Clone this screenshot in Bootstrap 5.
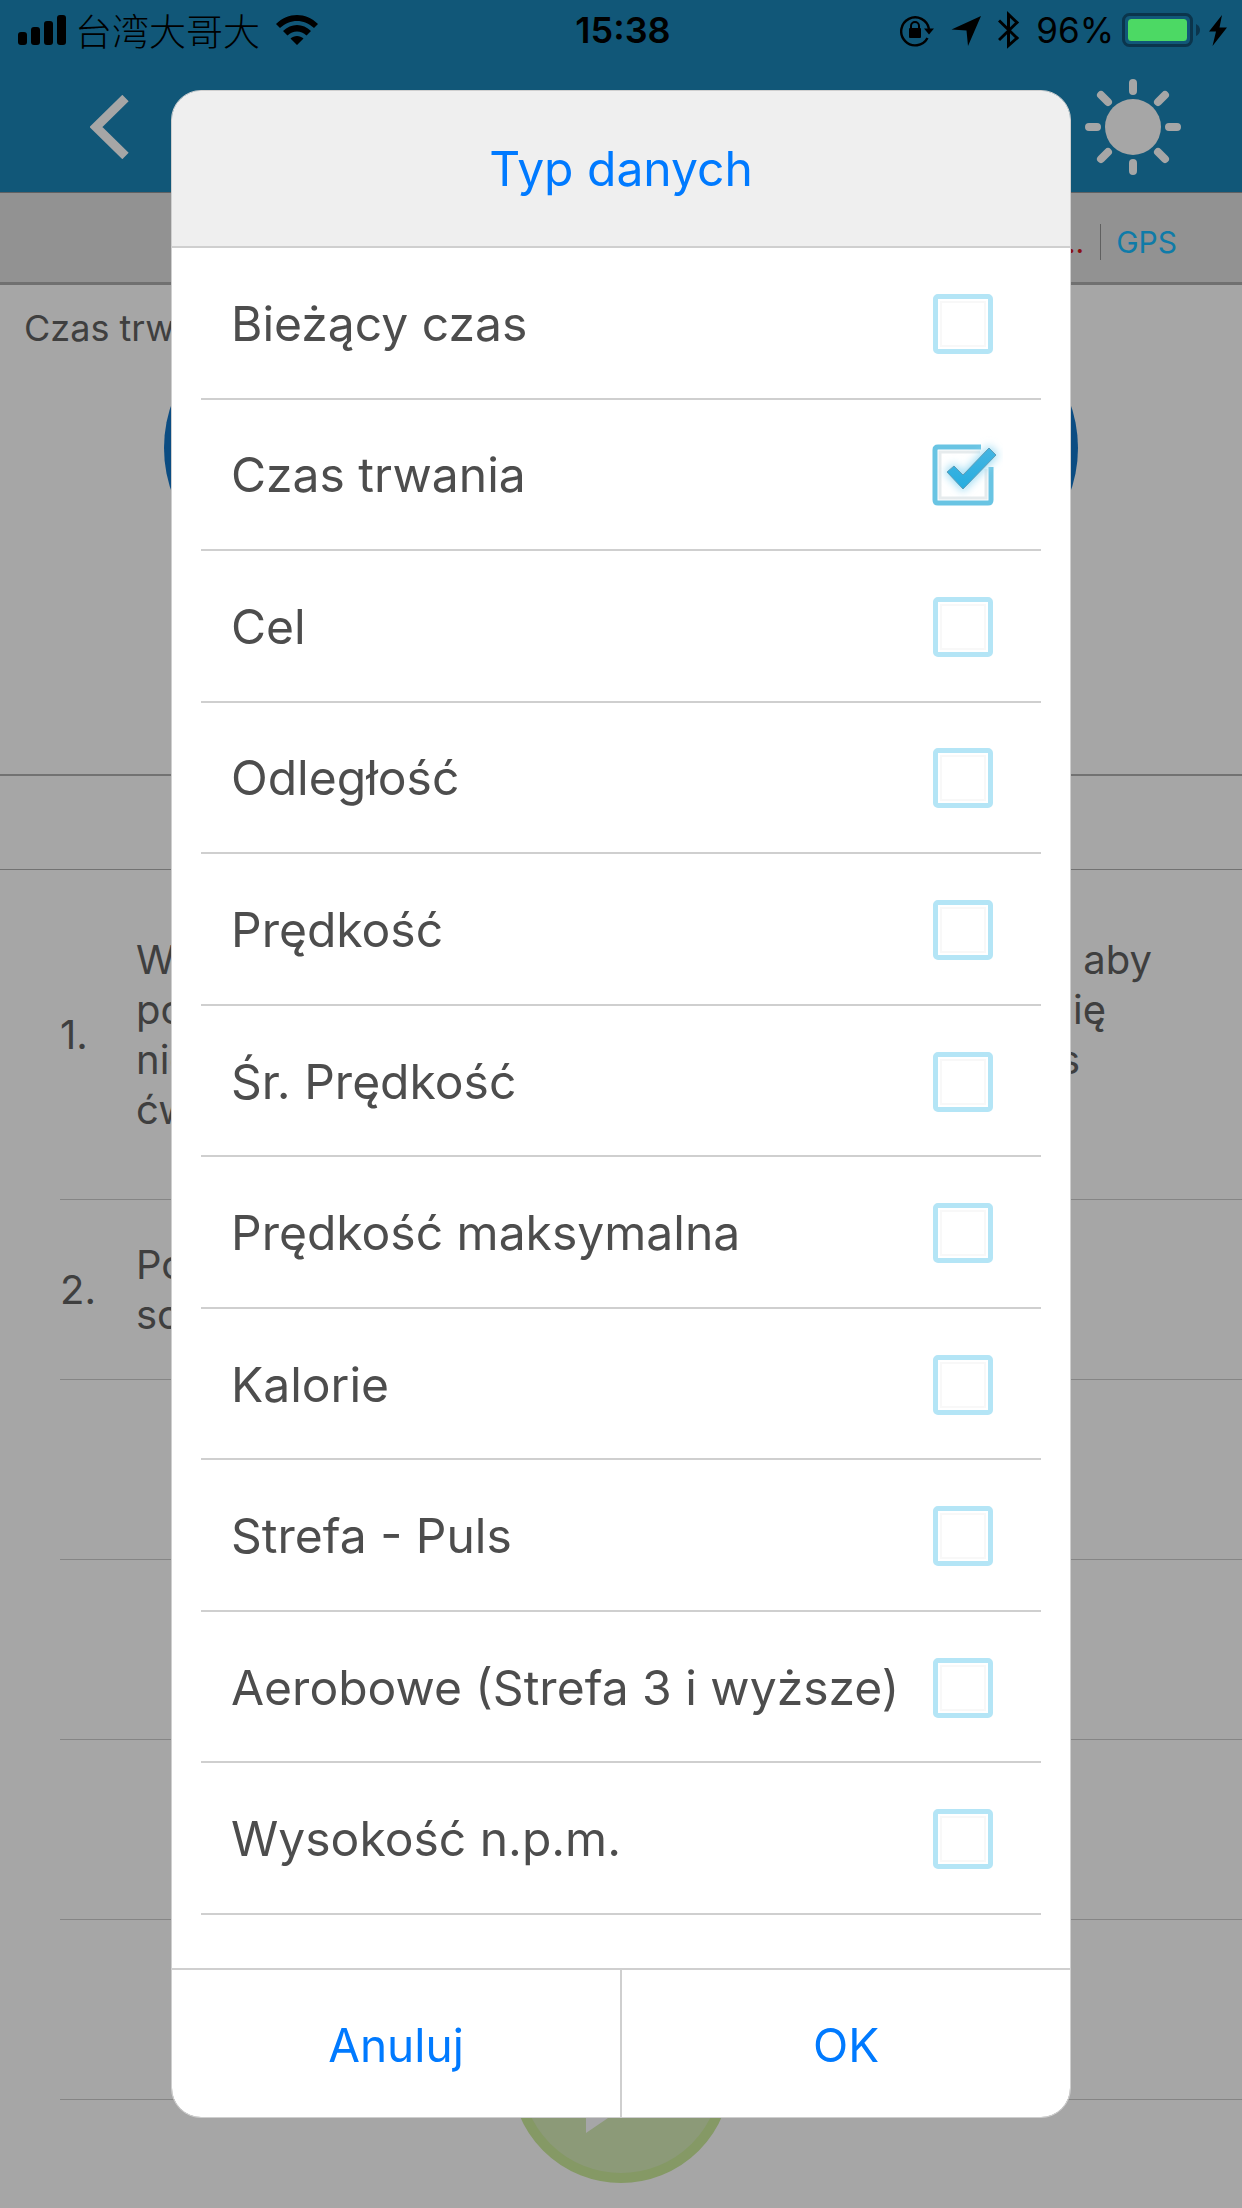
<!DOCTYPE html>
<html lang="pl">
<head>
<meta charset="utf-8">
<meta name="viewport" content="width=device-width, initial-scale=1">
<title>Typ danych</title>
<link href="https://cdn.jsdelivr.net/npm/bootstrap@5.3.0/dist/css/bootstrap.min.css" rel="stylesheet">
<style>
  body { font-family: Inter, "Noto Sans CJK SC", sans-serif; background: #a6a6a6; color: #3f3f3f; }
  .app-screen { min-height: 100vh; }
  .app-top { background: #115778; border-bottom: 1px solid #5f6163; }
  .status-bar { height: 60px; padding: 0 14px 0 18px; color: #000; font-size: 36px; line-height: 60px; }
  .status-side { flex: 1 1 0; height: 60px; }
  .carrier { font-family: "Noto Sans CJK SC", sans-serif; font-weight: 300; font-size: 37px; line-height: 60px; margin: 0 16px 0 8px; }
  .clock { font-weight: 600; }
  .charge { font-size: 35px; }
  .title-bar { height: 132px; padding: 2px 61px 0 90px; }
  .bare-btn { border: 0; background: none; padding: 0; line-height: 0; }
  .sensor-bar { height: 92px; background: #929292; border-bottom: 3px solid #707070; padding: 9px 65px 0 0; font-size: 30px; line-height: 44px; }
  .sensor-off { color: #8a1012; padding-right: 16px; }
  .sensor-on { color: #0f7ba8; border-left: 1px solid #5f5f5f; padding-left: 15px; line-height: 36px; }
  .data-panel { height: 491px; border-bottom: 2px solid #727272; }
  .data-panel > * { grid-area: 1 / 1; }
  .data-label { font-size: 36px; line-height: 54px; padding: 16px 24px; }
  .data-pill { width: 914px; height: 264px; margin-top: 31px; border-radius: 132px; background: #0b4c82; border: 0; }
  .tab-strip { height: 94px; border-bottom: 1px solid #727272; }
  .step-list { font-size: 40px; line-height: 50px; padding-left: 60px; }
  .step-item { min-height: 180px; border-bottom: 1px solid #858585; }
  .step-item.tall { min-height: 330px; }
  .step-no { flex: 0 0 76px; }
  .line-long { padding-right: 90px; }
  .line-mid { padding-right: 136px; }
  .line-short { padding-right: 162px; }
  .play-btn { bottom: 25px; left: 50%; margin-left: -110px; }

  .type-modal .modal-dialog { max-width: 900px; margin: 90px auto; }
  .type-modal .modal-content { border: 1px solid #cfcfcf; border-radius: 30px; overflow: hidden; color: #4d4d4d; }
  .type-modal .modal-header { height: 157px; padding: 0; border-bottom: 2px solid #cfcfcf; border-radius: 0; background: #efefef; }
  .type-modal .modal-title { font-size: 48px; line-height: 60px; font-weight: 400; color: #007aff; }
  .type-modal .modal-body { padding: 0 29px 53px; }
  .type-list { min-height: 1667px; }
  .type-row { flex: 1 1 0; border-bottom: 2px solid #cfcfcf; padding: 2px 48px 0 30px; font-size: 48px; line-height: 60px; cursor: pointer; }
  .tick-box { width: 60px; height: 60px; }
  .tick-box input { appearance: none; display: block; width: 60px; height: 60px; margin: 0; border: 5px solid #b4e5f6; border-radius: 5px; background: #fff; box-shadow: inset 0 0 0 2px #fff, inset 0 0 0 4px #f8f8f8; }
  .tick-box input:checked { border-color: transparent; box-shadow: none; }
  .tick-box svg { left: -10px; top: -10px; pointer-events: none; }
  .type-modal .modal-footer { height: 149px; padding: 0; border-top: 2px solid #cfcfcf; border-radius: 0; }
  .type-modal .modal-footer > * { margin: 0; }
  .answer-btn { flex: 1 1 0; border: 0; background: none; color: #007aff; font-size: 46px; line-height: 60px; padding: 2px 0 0; }
  .answer-btn + .answer-btn { border-left: 2px solid #cfcfcf; }
</style>
<script src="https://cdn.jsdelivr.net/npm/bootstrap@5.3.0/dist/js/bootstrap.bundle.min.js"></script>
</head>
<body>
<div class="app-screen position-relative overflow-hidden">
  <header class="app-top">
    <div class="status-bar d-flex align-items-center">
      <div class="status-side d-flex align-items-center">
        <svg width="49" height="60" viewBox="0 0 49 60"><rect y="32" width="9" height="13" rx="3"/><rect x="13" y="27" width="9" height="18" rx="3"/><rect x="26" y="21" width="9" height="24" rx="3"/><rect x="39" y="15" width="9" height="30" rx="3"/></svg>
        <span class="carrier">台湾大哥大</span>
        <svg width="42" height="60" viewBox="0 0 42 60"><path d="M0 24C12 12 30 12 42 24L38 28C28 18.500 14 18.500 4 28ZM7 31C15 23 27 23 35 31L30.500 35.500C25 30 17 30 11.500 35.500ZM14.500 38.500C18 35 24 35 27.500 38.500L21 45Z"/></svg>
      </div>
      <span class="clock">15:38</span>
      <div class="status-side d-flex align-items-center justify-content-end">
        <svg width="34" height="60" viewBox="0 0 34 60"><path d="M27.500 38A14 14 0 1 1 29 29" fill="none" stroke="#000" stroke-width="2.400"/><path d="M24 28.500H34L29 34.500Z"/><rect x="9" y="28" width="12" height="10" rx="1"/><path d="M11 29V26A4 4 0 0 1 19 26V29" fill="none" stroke="#000" stroke-width="2"/></svg>
        <svg class="ms-3 me-3" width="32" height="60" viewBox="0 0 32 60"><path d="M31 16L18 46L16.500 30.500L1.500 29.500Z"/></svg>
        <svg width="22" height="60" viewBox="0 0 22 60"><path d="M1 20.500L19 38L10.500 45.500V14.500L19 22.500L1 40" fill="none" stroke="#000" stroke-width="3"/></svg>
        <span class="charge ms-3 me-2">96%</span>
        <svg width="106" height="60" viewBox="0 0 106 60"><rect x="1.500" y="14.500" width="68" height="31" rx="6" fill="none" stroke="#0b354c" stroke-width="3"/><rect x="6" y="19" width="59" height="22" rx="3.500" fill="#4cd964"/><path d="M74 24Q78 26 78 30T74 36Z" fill="#0b354c"/><path d="M100 15L87 31.500H94L90.500 46L105 27.500H97.500Z"/></svg>
      </div>
    </div>
    <div class="title-bar d-flex align-items-center justify-content-between">
      <button class="bare-btn" type="button" aria-label="Wstecz"><svg width="40" height="64" viewBox="0 0 40 64"><path d="M35.500 3L6 32L35.500 61" fill="none" stroke="#a6a6a6" stroke-width="9"/></svg></button>
      <button class="bare-btn" type="button" aria-label="Jasność"><svg width="96" height="96" viewBox="-48 -48 96 96"><circle r="28" fill="#a6a6a6"/><path d="M0-44V-36M0 44V36M-44 0H-36M44 0H36M-32-32L-25-25M32-32L25-25M-32 32L-25 25M32 32L25 25" stroke="#a6a6a6" stroke-width="8" stroke-linecap="round"/></svg></button>
    </div>
  </header>
  <div class="sensor-bar d-flex align-items-center justify-content-end">
    <span class="sensor-off">...</span><span class="sensor-on">GPS</span>
  </div>
  <section class="data-panel d-grid">
    <button class="data-pill mx-auto" type="button" aria-label="Czas trwania"></button>
    <div class="data-label">Czas trwania</div>
  </section>
  <div class="tab-strip"></div>
  <div class="step-list">
    <div class="step-item tall d-flex align-items-center">
      <span class="step-no">1.</span>
      <div class="flex-fill">
        <div class="line-long d-flex justify-content-between"><span>W</span><span>aby</span></div>
        <div class="line-mid d-flex justify-content-between"><span>po</span><span>ię</span></div>
        <div class="line-short d-flex justify-content-between"><span>nie</span><span>s</span></div>
        <div>ćw</div>
      </div>
    </div>
    <div class="step-item d-flex align-items-center"><span class="step-no">2.</span><span>Po<br>so</span></div>
    <div class="step-item"></div>
    <div class="step-item"></div>
    <div class="step-item"></div>
    <div class="step-item"></div>
  </div>
  <button class="bare-btn play-btn position-absolute" type="button" aria-label="Start"><svg width="220" height="220" viewBox="0 0 220 220"><circle cx="110" cy="110" r="105" fill="#8c9a78" stroke="#859965" stroke-width="10"/><path d="M75 50V170L163 110Z" fill="#a6a6a8"/></svg></button>
</div>

<div class="modal type-modal d-block" tabindex="-1" role="dialog" aria-labelledby="typeTitle">
  <div class="modal-dialog">
    <form class="modal-content">
      <div class="modal-header justify-content-center"><h1 class="modal-title" id="typeTitle">Typ danych</h1></div>
      <div class="modal-body">
        <div class="type-list d-flex flex-column">
          <label class="type-row d-flex align-items-center justify-content-between"><span>Bieżący czas</span><span class="tick-box"><input type="checkbox"></span></label>
          <label class="type-row d-flex align-items-center justify-content-between"><span>Czas trwania</span><span class="tick-box position-relative"><input type="checkbox" checked><svg class="position-absolute" width="80" height="80" viewBox="-10 -10 80 80"><defs><filter id="glow" x="-40%" y="-40%" width="180%" height="180%"><feGaussianBlur stdDeviation="4"/></filter><linearGradient id="tick" x2="0" y2="1"><stop offset="0" stop-color="#45b5e2"/><stop offset="1" stop-color="#25addf"/></linearGradient></defs><path d="M47 7H7V53H53V24" fill="none" stroke="#e6ebed" stroke-width="3"/><path d="M48 2H5Q2 2 2 5V55Q2 58 5 58H55Q58 58 58 55V22" fill="none" stroke="#69c4e3" stroke-width="5"/><path d="M14 27L21 21L30 30L56 3L63 10L30 44Z" fill="#9fdcf3" stroke="#9fdcf3" stroke-width="4" filter="url(#glow)"/><path d="M14 27L21 21L30 30L56 3L63 10L30 44Z" fill="url(#tick)" stroke="#5d9db8" stroke-width="1"/></svg></span></label>
          <label class="type-row d-flex align-items-center justify-content-between"><span>Cel</span><span class="tick-box"><input type="checkbox"></span></label>
          <label class="type-row d-flex align-items-center justify-content-between"><span>Odległość</span><span class="tick-box"><input type="checkbox"></span></label>
          <label class="type-row d-flex align-items-center justify-content-between"><span>Prędkość</span><span class="tick-box"><input type="checkbox"></span></label>
          <label class="type-row d-flex align-items-center justify-content-between"><span>Śr. Prędkość</span><span class="tick-box"><input type="checkbox"></span></label>
          <label class="type-row d-flex align-items-center justify-content-between"><span>Prędkość maksymalna</span><span class="tick-box"><input type="checkbox"></span></label>
          <label class="type-row d-flex align-items-center justify-content-between"><span>Kalorie</span><span class="tick-box"><input type="checkbox"></span></label>
          <label class="type-row d-flex align-items-center justify-content-between"><span>Strefa - Puls</span><span class="tick-box"><input type="checkbox"></span></label>
          <label class="type-row d-flex align-items-center justify-content-between"><span>Aerobowe (Strefa 3 i wyższe)</span><span class="tick-box"><input type="checkbox"></span></label>
          <label class="type-row d-flex align-items-center justify-content-between"><span>Wysokość n.p.m.</span><span class="tick-box"><input type="checkbox"></span></label>
        </div>
      </div>
      <div class="modal-footer flex-nowrap align-items-stretch">
        <button class="answer-btn" type="button">Anuluj</button>
        <button class="answer-btn" type="button">OK</button>
      </div>
    </form>
  </div>
</div>
</body>
</html>
